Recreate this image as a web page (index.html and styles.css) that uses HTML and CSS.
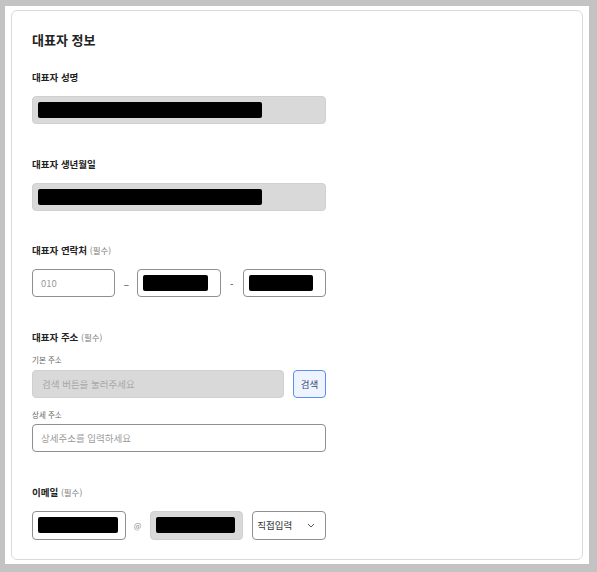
FILE: index.html
```html
<!DOCTYPE html>
<html lang="ko">
<head>
  <meta charset="UTF-8">
  <meta name="viewport" content="width=device-width, initial-scale=1">
  <title>대표자 정보</title>
  <link rel="stylesheet" href="styles.css">
</head>

<body>
  <div class="sheet">
    <!-- Representative info card -->
    <div class="card">
      <h2 class="card-title">대표자 정보</h2>

      <!-- Name -->
      <div class="field">
        <label class="field-label">대표자 성명</label>
        <div class="input input-locked wide"><span class="redact redact-long"></span></div>
      </div>

      <!-- Birth date -->
      <div class="field">
        <label class="field-label">대표자 생년월일</label>
        <div class="input input-locked wide"><span class="redact redact-long"></span></div>
      </div>

      <!-- Phone -->
      <div class="field">
        <label class="field-label">대표자 연락처 <span class="req">(필수)</span></label>
        <div class="phone-row">
          <div class="input"><span class="placeholder">010</span></div>
          <span class="dash">–</span>
          <div class="input"><span class="redact redact-fill"></span></div>
          <span class="dash">-</span>
          <div class="input"><span class="redact redact-fill"></span></div>
        </div>
      </div>

      <!-- Address -->
      <div class="field">
        <label class="field-label">대표자 주소 <span class="req">(필수)</span></label>
        <div class="sub-label">기본 주소</div>
        <div class="address-row">
          <div class="input input-locked"><span class="placeholder">검색 버튼을 눌러주세요</span></div>
          <button class="btn-search">검색</button>
        </div>
        <div class="sub-label sub-label-detail">상세 주소</div>
        <div class="input wide"><span class="placeholder">상세주소를 입력하세요</span></div>
      </div>

      <!-- Email -->
      <div class="field">
        <label class="field-label">이메일 <span class="req">(필수)</span></label>
        <div class="email-row">
          <div class="input email-box"><span class="redact redact-fill"></span></div>
          <span class="at">@</span>
          <div class="input input-locked email-box"><span class="redact redact-fill"></span></div>
          <div class="input select">
            <span class="select-text">직접입력</span>
            <svg class="chevron" width="8" height="5" viewBox="0 0 8 5">
              <path d="M1 1 L4 4 L7 1" fill="none" stroke="#555" stroke-width="1"/>
            </svg>
          </div>
        </div>
      </div>
    </div>
  </div>
</body>
</html>
```

FILE: styles.css
```css
/* Base reset */
* {
  margin: 0;
  padding: 0;
  box-sizing: border-box;
}
body {
  background: #c3c3c3;
  font-family: 'Noto Sans CJK KR', 'Noto Sans', sans-serif;
  color: #222;
  height: 572px;
  overflow: hidden;
}

/* White sheet + card */
.sheet {
  margin: 6px 0 0 5px;
  width: 584px;
  height: 558px;
  background: #fff;
  padding: 4px 0 0 6px;
}
.card {
  width: 572px;
  height: 550px;
  border: 1px solid #dadada;
  border-radius: 6px;
  padding: 20px 0 0 20px;
}
.card-title {
  font-size: 13px;
  line-height: 18px;
  font-weight: 700;
  color: #222;
  margin-bottom: 21px;
}

/* Fields */
.field {
  width: 294px;
  margin-bottom: 32.5px;
}
.field-label {
  display: block;
  font-size: 9.5px;
  line-height: 14px;
  font-weight: 700;
  color: #222;
  margin-bottom: 12px;
}
.req {
  font-size: 8.5px;
  font-weight: 400;
  color: #777;
}
.sub-label {
  font-size: 7.5px;
  line-height: 12px;
  color: #666;
  margin: -2px 0 4.5px;
}
.sub-label-detail {
  margin: 10.5px 0 3.5px;
}

/* Inputs */
.input {
  height: 28px;
  border: 1px solid #8f8f8f;
  border-radius: 4px;
  background: #fff;
  display: flex;
  align-items: center;
  padding: 0 5px;
}
.input-locked {
  background: #d9d9d9;
  border-color: #d0d0d0;
}
.wide {
  width: 294px;
}
.placeholder {
  font-size: 9.5px;
  color: #9a9a9a;
  padding-left: 3px;
}
.input-locked .placeholder {
  color: #a8a8a8;
}
.redact {
  display: block;
  height: 16px;
  background: #000;
  border-radius: 2px;
}
.redact-long {
  width: 224px;
}
.redact-fill {
  flex: 1;
}

/* Phone row */
.phone-row {
  display: grid;
  grid-template-columns: 1fr auto 1fr auto 1fr;
  align-items: center;
  column-gap: 8px;
}
.phone-row .input {
  padding: 0 12px 0 5px;
}
.phone-row .placeholder {
  padding-left: 3px;
}
.dash {
  width: 6px;
  font-size: 10px;
  color: #444;
  text-align: center;
}

/* Address row */
.address-row {
  display: flex;
  gap: 9px;
}
.address-row .input {
  flex: 1;
}
.address-row .placeholder {
  padding-left: 4px;
}
.btn-search {
  width: 33px;
  height: 28px;
  border: 1px solid #5b8ef0;
  border-radius: 4px;
  background: #eef4ff;
  color: #3c4a78;
  font-family: inherit;
  font-size: 9.5px;
}

/* Email row */
.email-row {
  display: flex;
  align-items: center;
}
.email-row .input {
  height: 29px;
}
.email-box {
  width: 94px;
}
.email-row .email-box {
  padding: 0 7px 0 5px;
}
.at {
  width: 24px;
  text-align: center;
  font-size: 8px;
  color: #888;
}
.email-row .select {
  width: 74px;
  margin-left: 9px;
  justify-content: space-between;
  padding: 0 10px 0 4px;
}
.select-text {
  font-size: 9.5px;
  color: #333;
}
```
